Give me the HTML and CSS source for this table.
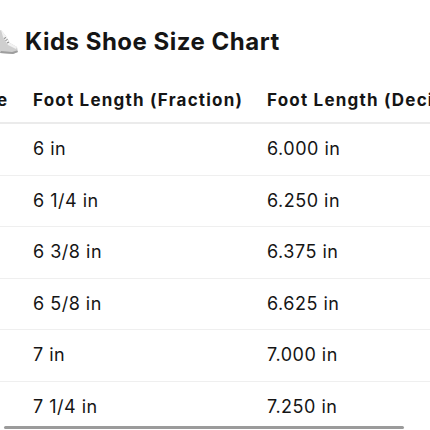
FILE: index.html
```html
<!DOCTYPE html>
<html lang="en">
<head>
<meta charset="utf-8">
<link rel="stylesheet" href="styles.css">
</head>
<body>
<div class="page">
  <h1 class="title"><svg class="shoe" viewBox="0 0 28 28" width="28" height="28" aria-hidden="true"><path d="M3 5 L9 2 L14 8 L18 15 L25 19 L26 24 L21 26 L8 25 L5 21 Z" fill="#cfcfcf"/><path d="M9 2 L14 8 L18 15 L25 19 L24 21 L16 17 L11 9 Z" fill="#f2f2f2"/><path d="M8 25 L21 26 L26 24 L25 22.5 L20 24 L9 23 Z" fill="#9e9e9e"/><path d="M12 10.5 L14 9.5 M13.5 12.5 L15.5 11.5 M15 15 L17 14" stroke="#808080" stroke-width="1"/></svg><span>Kids Shoe Size Chart</span></h1>
  <div class="scroller">
    <table class="chart">
      <colgroup><col class="c1"><col class="c2"><col class="c3"><col class="c4"></colgroup>
      <thead>
        <tr><th>US Size</th><th>Foot Length (Fraction)</th><th>Foot Length (Decimal)</th><th>Foot Length (cm)</th></tr>
      </thead>
      <tbody>
        <tr><td>10C</td><td>6 in</td><td>6.000 in</td><td>15.2 cm</td></tr>
        <tr><td>10.5C</td><td>6 1/4 in</td><td>6.250 in</td><td>15.9 cm</td></tr>
        <tr><td>11C</td><td>6 3/8 in</td><td>6.375 in</td><td>16.2 cm</td></tr>
        <tr><td>11.5C</td><td>6 5/8 in</td><td>6.625 in</td><td>16.8 cm</td></tr>
        <tr><td>12C</td><td>7 in</td><td>7.000 in</td><td>17.8 cm</td></tr>
        <tr><td>12.5C</td><td>7 1/4 in</td><td>7.250 in</td><td>18.4 cm</td></tr>
      </tbody>
    </table>
  </div>
  <div class="scrollbar"></div>
</div>
</body>
</html>
```

FILE: styles.css
```css
* { box-sizing: border-box; }
html, body { margin: 0; padding: 0; background: #fff; }
body {
  font-family: Inter, "Noto Sans", "Liberation Sans", sans-serif;
  color: #151515;
}
.page {
  position: relative;
  width: 430px;
  height: 430px;
  overflow: hidden;
}
.title {
  display: flex;
  align-items: center;
  gap: 5px;
  margin: 27px 0 0 -8px;
  font-size: 24px;
  line-height: 30px;
  font-weight: 700;
  letter-spacing: 0.5px;
  white-space: nowrap;
}
.shoe { flex: none; }
.scroller {
  margin-top: 21px;
  overflow: hidden;
}
.chart {
  border-collapse: collapse;
  table-layout: fixed;
  width: 846px;
  margin-left: -75px;
}
.c1 { width: 96px; }
.c2 { width: 234px; }
.c3 { width: 234px; }
.c4 { width: 282px; }
.chart th {
  text-align: left;
  font-size: 17px;
  font-weight: 700;
  line-height: 24px;
  letter-spacing: 1.2px;
  padding: 10px 12px 10px 12px;
  border-bottom: 2px solid #ebebeb;
  white-space: nowrap;
}
.chart td {
  font-size: 18px;
  font-weight: 400;
  line-height: 24px;
  letter-spacing: 0.5px;
  padding: 13.25px 12px;
  border-bottom: 1px solid #efefef;
  white-space: nowrap;
}
.scrollbar {
  position: absolute;
  left: 4px;
  bottom: 1px;
  width: 400px;
  height: 3px;
  border-radius: 2px;
  background: #9b9b9b;
}
```
